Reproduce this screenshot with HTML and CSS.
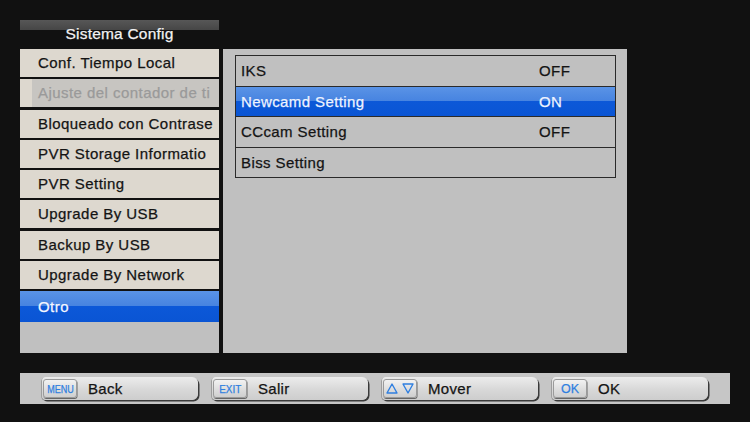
FILE: index.html
```html
<!DOCTYPE html>
<html lang="es">
<head>
  <meta charset="UTF-8" />
  <title>Sistema Config</title>
  <link rel="stylesheet" href="styles.css">
</head>
<body>
  <div class="screen">
    <div class="main">
      <div class="side">
        <div class="side-title">Sistema Config</div>
        <div class="menu">
          <ul class="menu-list">
            <li class="menu-item">Conf. Tiempo Local</li>
            <li class="menu-item disabled">Ajuste del contador de ti</li>
            <li class="menu-item">Bloqueado con Contrase</li>
            <li class="menu-item">PVR Storage Informatio</li>
            <li class="menu-item">PVR Setting</li>
            <li class="menu-item">Upgrade By USB</li>
            <li class="menu-item">Backup By USB</li>
            <li class="menu-item">Upgrade By Network</li>
            <li class="menu-item selected">Otro</li>
          </ul>
        </div>
      </div>

      <div class="content">
        <div class="rows">
          <div class="row"><span class="row-name">IKS</span><span class="row-value">OFF</span></div>
          <div class="row selected"><span class="row-name">Newcamd Setting</span><span class="row-value">ON</span></div>
          <div class="row"><span class="row-name">CCcam Setting</span><span class="row-value">OFF</span></div>
          <div class="row"><span class="row-name">Biss Setting</span><span class="row-value"></span></div>
        </div>
      </div>
    </div>

    <div class="help-bar">
      <div class="help-btn">
        <span class="key"><span class="key-text small">MENU</span></span>
        <span class="help-label">Back</span>
      </div>
      <div class="help-btn">
        <span class="key"><span class="key-text mid">EXIT</span></span>
        <span class="help-label">Salir</span>
      </div>
      <div class="help-btn">
        <span class="key arrows">
          <svg width="12" height="11" viewBox="0 0 12 11"><path d="M6 1 L11 10 L1 10 Z" fill="none" stroke="#2f7fe0" stroke-width="1.4" stroke-linejoin="round"/></svg>
          <svg width="12" height="11" viewBox="0 0 12 11"><path d="M1 1 L11 1 L6 10 Z" fill="none" stroke="#2f7fe0" stroke-width="1.4" stroke-linejoin="round"/></svg>
        </span>
        <span class="help-label">Mover</span>
      </div>
      <div class="help-btn">
        <span class="key"><span class="key-text big">OK</span></span>
        <span class="help-label">OK</span>
      </div>
    </div>
  </div>
</body>
</html>
```

FILE: styles.css
```css
* {
  margin: 0;
  padding: 0;
  box-sizing: border-box;
}

body {
  width: 750px;
  height: 422px;
  background: #111111;
  font-family: "Liberation Sans", Arial, sans-serif;
  font-size: 15px;
  color: #141414;
  -webkit-text-stroke: 0.25px currentColor;
  overflow: hidden;
}

.screen {
  padding: 20px 0 0 20px;
}

.main {
  display: flex;
  gap: 4px;
  height: 333px;
}

/* left column */
.side {
  width: 199px;
  display: flex;
  flex-direction: column;
}

.side-title {
  height: 29px;
  padding-top: 6px;
  background: linear-gradient(180deg, #575757 0, #464646 10px, transparent 10px);
  color: #f2f2f2;
  font-size: 15.5px;
  line-height: 15px;
  text-align: center;
  letter-spacing: 0.2px;
}

.menu {
  flex: 1;
  background: #c0c0c0;
}

.menu-list {
  list-style: none;
  display: flex;
  flex-direction: column;
  gap: 2.25px;
  background: #111111;
}

.menu-item {
  height: 28px;
  line-height: 28px;
  padding-left: 18px;
  background: #ddd8cf;
  white-space: nowrap;
  overflow: hidden;
  letter-spacing: 0.45px;
}

.menu-item.disabled {
  background: linear-gradient(90deg, #ddd8cf 12px, #c7c5c1 12px);
  color: #9a9a9a;
}

.menu-item.selected {
  height: 31px;
  line-height: 31px;
  background: linear-gradient(180deg, #5a93e6 0, #4683e0 50%, #0c58d8 50%, #0a55d4 100%);
  color: #f4f6ff;
}

/* right panel */
.content {
  width: 404px;
  margin-top: 29px;
  background: #c0c0c0;
  padding: 6px 11px 0 12px;
}

.rows {
  border-top: 1.5px solid #2a2a2a;
  border-left: 1.5px solid #2a2a2a;
  border-right: 1.5px solid #2a2a2a;
}

.row {
  height: 30.5px;
  display: flex;
  align-items: center;
  padding-left: 5px;
  border-bottom: 1.5px solid #2a2a2a;
  letter-spacing: 0.4px;
}

.row.selected {
  background: linear-gradient(180deg, #5a93e6 0, #4683e0 50%, #0c58d8 50%, #0a55d4 100%);
  color: #eef3ff;
}

.row-name {
  width: 298px;
}

/* bottom help bar */
.help-bar {
  margin-top: 20px;
  width: 710px;
  height: 31px;
  background: #c6c6c6;
  padding: 4px 0 0 22px;
  display: flex;
  gap: 14px;
}

.help-btn {
  width: 156px;
  height: 23px;
  display: flex;
  align-items: center;
  gap: 11px;
  padding-left: 1px;
  border-radius: 4px 6px 6px 4px;
  background: linear-gradient(180deg, #ececec 0, #d8d8d8 55%, #cdcdcd 100%);
  box-shadow: 1.5px 1.5px 0 #3a3a3a, -0.5px 0.5px 0 #777;
}

.key {
  width: 34px;
  height: 19px;
  display: flex;
  align-items: center;
  justify-content: center;
  border-radius: 3px;
  background: linear-gradient(180deg, #f2f2f2 0, #dcdcdc 60%, #cfcfcf 100%);
  border: 1px solid #9a9a9a;
  box-shadow: 0.5px 1px 0 #666;
}

.key.arrows {
  gap: 4px;
}

.key-text {
  display: inline-block;
  color: #2f7fe0;
}

.key-text.small {
  font-size: 10.5px;
  transform: scaleX(0.86);
}

.key-text.mid {
  font-size: 11px;
  transform: scaleX(0.9);
}

.key-text.big {
  font-size: 12.5px;
}

.help-label {
  font-size: 15px;
  letter-spacing: 0.3px;
}
```
